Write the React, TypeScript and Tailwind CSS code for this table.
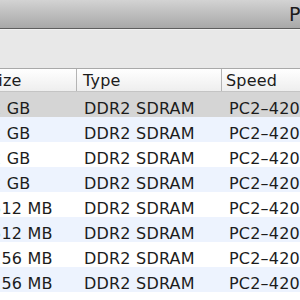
const rows = [
  { size: "2 GB", type: "DDR2 SDRAM", speed: "PC2–4200" },
  { size: "2 GB", type: "DDR2 SDRAM", speed: "PC2–4200" },
  { size: "2 GB", type: "DDR2 SDRAM", speed: "PC2–4200" },
  { size: "2 GB", type: "DDR2 SDRAM", speed: "PC2–4200" },
  { size: "512 MB", type: "DDR2 SDRAM", speed: "PC2–4200" },
  { size: "512 MB", type: "DDR2 SDRAM", speed: "PC2–4200" },
  { size: "256 MB", type: "DDR2 SDRAM", speed: "PC2–4200" },
  { size: "256 MB", type: "DDR2 SDRAM", speed: "PC2–4200" },
];

function rowBg(i: number) {
  if (i === 0) return "bg-[#d5d5d5]";
  return i % 2 === 1 ? "bg-[#edf3fe]" : "bg-white";
}

export default function App() {
  return (
    <div
      className="w-[300px] h-[300px] overflow-hidden bg-white text-[#1c1c1c]"
      style={{ fontFamily: '"DejaVu Sans", sans-serif' }}
    >
      {/* Title bar */}
      <div className="h-[29px] border-b border-[#5e5e5e] bg-gradient-to-b from-[#d3d3d3] to-[#a8a8a8] pl-[289px] pt-[3px] whitespace-nowrap text-[19px] leading-[22px]">
        Properties
      </div>

      {/* Toolbar strip */}
      <div className="h-[39px] bg-[#e8e8e8] border-t border-[#f2f2f2]" />

      {/* Table */}
      <div className="ml-[-14px] w-[420px] tracking-[0.2px]">
        <div className="flex h-[24px] border-t border-b border-t-[#a9a9a9] border-b-[#c4c4c4] bg-gradient-to-b from-white to-[#eeeeee] text-[16px] leading-[19px] whitespace-nowrap">
          <div className="w-[91px] pl-[2px] pt-[2px] border-r border-[#b4b4b4]">Size</div>
          <div className="w-[145px] pl-[6px] pt-[2px] border-r border-[#b4b4b4]">Type</div>
          <div className="flex-1 pl-[4px] pt-[2px]">Speed</div>
        </div>
        {rows.map((r, i) => (
          <div
            key={i}
            className={`flex h-[25px] text-[16px] leading-[19px] whitespace-nowrap ${rowBg(i)}`}
          >
            <div className="w-[91px] pl-[5px] pt-[7px]">{r.size}</div>
            <div className="w-[145px] pl-[7px] pt-[7px]">{r.type}</div>
            <div className="flex-1 pl-[7px] pt-[7px]">{r.speed}</div>
          </div>
        ))}
      </div>
    </div>
  );
}
